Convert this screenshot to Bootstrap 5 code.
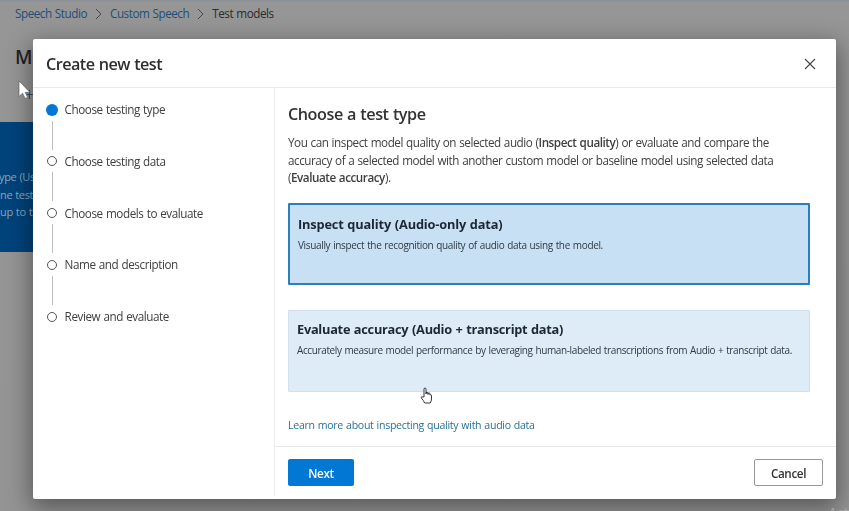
<!DOCTYPE html>
<html lang="en">
<head>
<meta charset="utf-8">
<meta name="viewport" content="width=device-width, initial-scale=1">
<title>Create new test</title>
<link href="https://cdn.jsdelivr.net/npm/bootstrap@5.3.0/dist/css/bootstrap.min.css" rel="stylesheet">
<style>
body{font-family:"Open Sans","Noto Sans",sans-serif;font-size:11.7px;line-height:17.5px;letter-spacing:-.46px;word-spacing:.6px;color:#404040;background:#959595;height:511px;overflow:hidden}
.backpage{height:511px;background:linear-gradient(#8a9198 0,#969696 3px,#949494 100%)}
.trail{height:28px;padding:0 0 1px 15px;gap:7px}
.trail a{color:#1d4e76}
.trail span{color:#2b2b2b}
.page-title{font-size:19px;font-weight:600;line-height:24px;margin:17px 0 0 15px;color:#222}
.toolbar-add{margin:18px 0 0 25px;height:18px}
.banner{width:120px;height:130px;margin-top:17px;background:#00437b;color:#8ba6bf;padding-top:46px;font-size:11px;letter-spacing:-.36px;white-space:nowrap;text-indent:-1px}
.shell{padding:39px 0 0 33px}
.shell .modal-dialog{margin:0;width:803px;max-width:none}
.shell .modal-content{height:459.5px;border:0;border-radius:2px;box-shadow:0 7px 24px 2px rgba(0,0,0,.42);color:#404040}
.shell .modal-header{height:49px;border-bottom:1px solid #eaeaea;padding:1px 20px 0 13px;border-radius:0}
.shell .modal-title{font-size:16.2px;font-weight:600;line-height:22px;color:#2e2e2e;letter-spacing:-.54px}
.close-x{width:12px;height:12px}
.steps{width:242px;border-right:1px solid #eaeaea;padding:12.500px 0 0 13px;margin-bottom:3px}
.step-item{height:51.8px}
.rail{width:12px}
.dot{width:10px;height:10px;margin-top:4px;border:1.3px solid #555;border-radius:50%;flex:none}
.dot.now{width:12px;height:12px;margin-top:3px;background:#0078d4;border:0}
.stem{width:1px;height:29px;background:#bdbdbd;margin-top:6px}
.now + .stem{margin-top:5px}
.step-name{margin-left:6.600px;padding-top:.5px;letter-spacing:-.43px}
.side{min-width:0}
.pane{height:358px;padding:15px 26.5px 0 13px}
.pane h2{font-size:16.2px;font-weight:600;line-height:22px;margin:0 0 9px;color:#333;letter-spacing:-.46px}
.intro{margin:0 0 16px;white-space:nowrap}
.intro b{font-weight:600}
.choice{height:82px;border:1px solid #d3e0eb;background:#deecf8;padding:9px 8px;border-radius:1px;color:#303a44}
.choice.picked{border:2px solid #2b80bb;background:#c7e0f4;padding-top:10px}
.choice h3{font-size:12.8px;font-weight:700;line-height:18px;margin:0 0 5px;color:#1e2733;letter-spacing:-.27px}
.choice.picked h3{letter-spacing:-.17px}
.choice p{font-size:10px;line-height:14px;margin:0;white-space:nowrap;letter-spacing:-.38px}
.choice.picked p{letter-spacing:-.34px}
.choice + .choice{margin-top:25px}
.more{font-size:10.6px;line-height:16px;color:#26719b;margin-top:25px;letter-spacing:-.3px}
.shell .modal-footer{border-top:1px solid #e8e8e8;padding:12px 13px 0 13px;height:52px}
.shell .btn{font-size:11.7px;font-weight:600;line-height:16px;height:27px;border-radius:2px;padding:0;letter-spacing:-.4px}
.shell .btn-next{width:66px;background:#0078d4;color:#fff;letter-spacing:-.3px}
.btn-cancel{width:69px;background:#fff;border:1px solid #999;color:#333}
.pointer-arrow{left:18px;top:80px;z-index:1100}
.pointer-hand{left:420px;top:387px;z-index:1100}
.watermark{left:828px;top:502px;z-index:1100;font-size:15px;line-height:20px;color:#a3a3a3;white-space:nowrap}
</style>
<script src="https://cdn.jsdelivr.net/npm/bootstrap@5.3.0/dist/js/bootstrap.bundle.min.js"></script>
</head>
<body>
<div class="backpage">
  <nav class="trail d-flex align-items-center">
    <a class="text-decoration-none" href="#">Speech Studio</a>
    <svg width="9" height="12" viewBox="0 0 9 12" fill="none" stroke="#484848"><path d="M2 1l5 5-5 5"/></svg>
    <a class="text-decoration-none" href="#">Custom Speech</a>
    <svg width="9" height="12" viewBox="0 0 9 12" fill="none" stroke="#484848"><path d="M2 1l5 5-5 5"/></svg>
    <span>Test models</span>
  </nav>
  <div class="page-title">M</div>
  <div class="toolbar-add"><svg class="d-block" width="9" height="12" viewBox="0 0 9 12" stroke="#38516b" fill="none"><path d="M0 7.500h9M4.500 3v9"/></svg></div>
  <div class="banner">ype (Us<br>ne test<br>up to t</div>
</div>

<div class="modal d-block overflow-hidden shell" tabindex="-1">
  <div class="modal-dialog">
    <div class="modal-content">
      <div class="modal-header d-flex justify-content-between align-items-center">
        <h1 class="modal-title">Create new test</h1>
        <svg class="close-x" viewBox="0 0 12 12" fill="none" stroke="#444" stroke-width="1.1"><path d="M1 1l10 10M11 1L1 11"/></svg>
      </div>
      <div class="d-flex flex-grow-1">
        <div class="steps flex-shrink-0">
          <div class="step-item d-flex"><div class="rail d-flex flex-column align-items-center"><i class="dot now"></i><i class="stem"></i></div><span class="step-name">Choose testing type</span></div>
          <div class="step-item d-flex"><div class="rail d-flex flex-column align-items-center"><i class="dot"></i><i class="stem"></i></div><span class="step-name">Choose testing data</span></div>
          <div class="step-item d-flex"><div class="rail d-flex flex-column align-items-center"><i class="dot"></i><i class="stem"></i></div><span class="step-name">Choose models to evaluate</span></div>
          <div class="step-item d-flex"><div class="rail d-flex flex-column align-items-center"><i class="dot"></i><i class="stem"></i></div><span class="step-name">Name and description</span></div>
          <div class="step-item d-flex"><div class="rail d-flex flex-column align-items-center"><i class="dot"></i></div><span class="step-name">Review and evaluate</span></div>
        </div>
        <div class="side flex-grow-1">
          <div class="pane">
            <h2>Choose a test type</h2>
            <p class="intro">You can inspect model quality on selected audio (<b>Inspect quality</b>) or evaluate and compare the<br>accuracy of a selected model with another custom model or baseline model using selected data<br>(<b>Evaluate accuracy</b>).</p>
            <div class="choice picked"><h3>Inspect quality (Audio-only data)</h3><p>Visually inspect the recognition quality of audio data using the model.</p></div>
            <div class="choice"><h3>Evaluate accuracy (Audio + transcript data)</h3><p>Accurately measure model performance by leveraging human-labeled transcriptions from Audio + transcript data.</p></div>
            <a class="more d-block text-decoration-none" href="#">Learn more about inspecting quality with audio data</a>
          </div>
          <div class="modal-footer d-flex justify-content-between align-items-start">
            <button class="btn btn-next m-0">Next</button>
            <button class="btn btn-cancel m-0">Cancel</button>
          </div>
        </div>
      </div>
    </div>
  </div>
</div>
<div class="watermark position-fixed">Act</div>
<svg class="pointer-arrow position-absolute" width="13" height="20" viewBox="0 0 13 20"><path d="M1 1v15.500l3.600-3.300 2.500 5.300 2.500-1.200-2.400-5h4.600z" fill="#fff" stroke="#555" stroke-width=".6"/></svg>
<svg class="pointer-hand position-absolute" width="13" height="17" viewBox="0 0 13 17"><path d="M4 10V2.200Q4 1 5 1t1 1.200V7V5.700q1-1 2 .2V7.500V6.300q1-.8 1.900.2V8q1.600-.9 1.600.7V12q0 2-1.300 4H4.700Q3.500 13.500 1.200 10.800q0-1.600 1.500-.9z" fill="#fff" stroke="#222" stroke-width=".9" stroke-linejoin="round"/></svg>
</body>
</html>
